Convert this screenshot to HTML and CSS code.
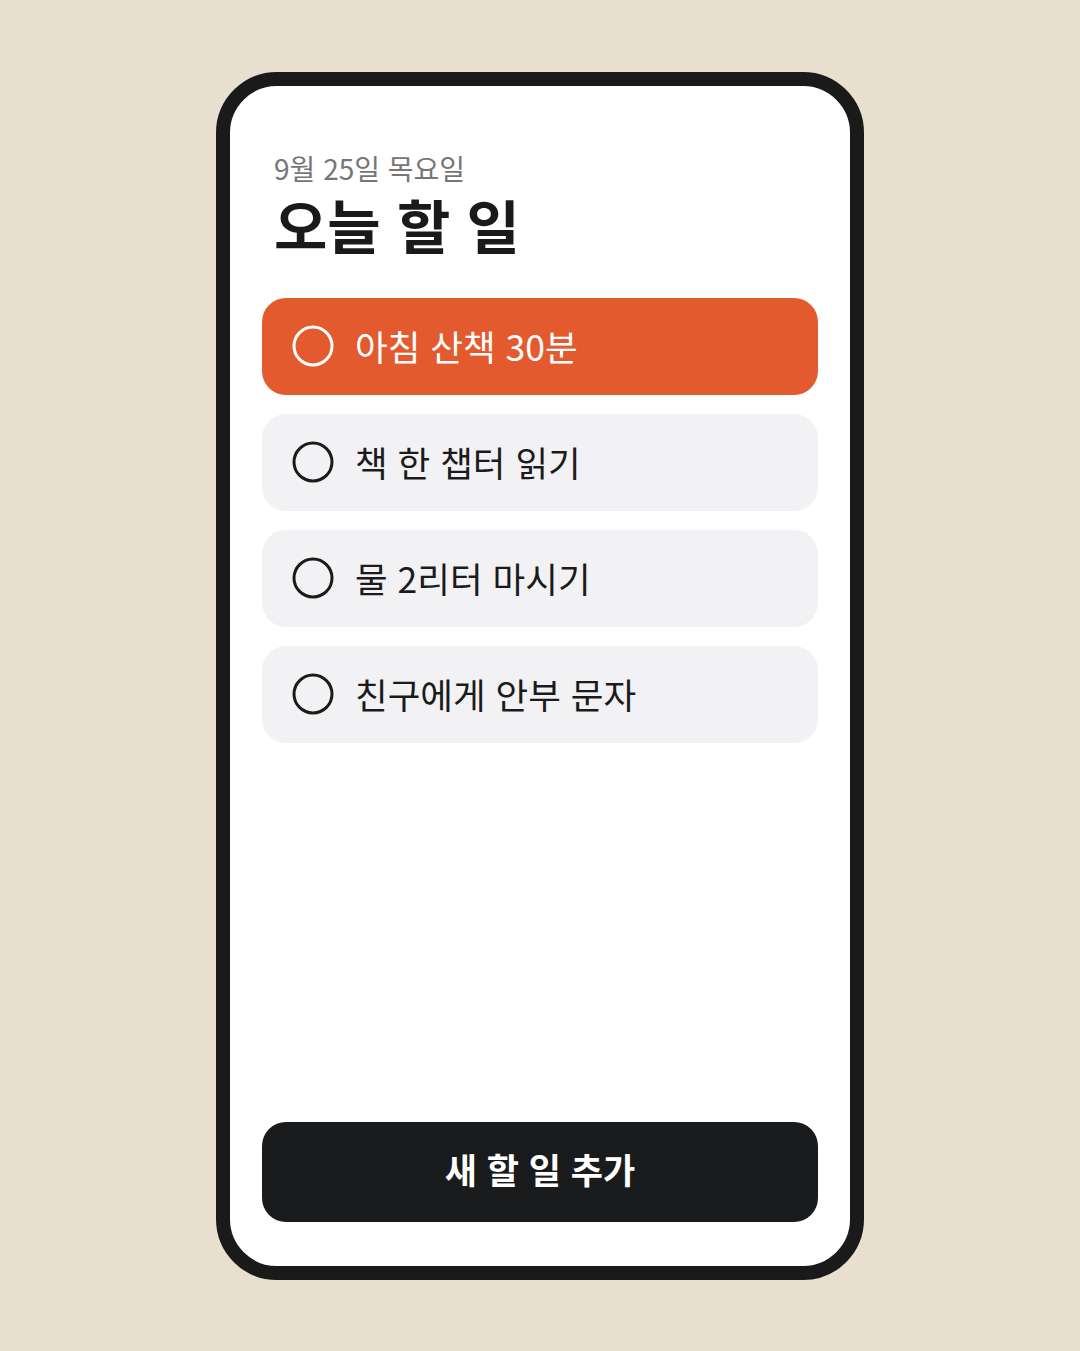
FILE: index.html
```html
<!DOCTYPE html>
<html lang="ko">
<head>
<meta charset="utf-8">
<link rel="stylesheet" href="styles.css">
</head>
<body>
<div class="stage">
  <div class="phone">
    <header class="head">
      <div class="date">9월 25일 목요일</div>
      <h1 class="title">오늘 할 일</h1>
    </header>
    <ul class="list">
      <li class="item active">
        <svg class="check" viewBox="0 0 42 42"><circle cx="21" cy="21" r="19" fill="none" stroke="currentColor" stroke-width="3"/></svg>
        <span class="label">아침 산책 30분</span>
      </li>
      <li class="item">
        <svg class="check" viewBox="0 0 42 42"><circle cx="21" cy="21" r="19" fill="none" stroke="currentColor" stroke-width="3"/></svg>
        <span class="label">책 한 챕터 읽기</span>
      </li>
      <li class="item">
        <svg class="check" viewBox="0 0 42 42"><circle cx="21" cy="21" r="19" fill="none" stroke="currentColor" stroke-width="3"/></svg>
        <span class="label">물 2리터 마시기</span>
      </li>
      <li class="item">
        <svg class="check" viewBox="0 0 42 42"><circle cx="21" cy="21" r="19" fill="none" stroke="currentColor" stroke-width="3"/></svg>
        <span class="label">친구에게 안부 문자</span>
      </li>
    </ul>
    <button class="add">새 할 일 추가</button>
  </div>
</div>
</body>
</html>
```
FILE: styles.css
```css
* { box-sizing: border-box; }
html, body { margin: 0; padding: 0; }
body {
  background: #e8dfcf;
  font-family: "Noto Sans CJK KR", "Noto Sans", sans-serif;
  color: #1b1b1b;
}
.stage {
  width: 1080px;
  height: 1351px;
  display: flex;
  align-items: center;
  justify-content: center;
}
.phone {
  width: 648px;
  height: 1208px;
  background: #fff;
  border: 14px solid #1a1a1a;
  border-radius: 61px;
  padding: 64px 32px 44px;
  display: flex;
  flex-direction: column;
}
.head {
  padding: 0 12px;
  margin-bottom: 43px;
}
.date {
  font-size: 28px;
  line-height: 36px;
  color: #767676;
}
.title {
  margin: 7px 0 0;
  font-size: 58px;
  line-height: 62px;
  font-weight: 700;
  color: #1a1a1a;
}
.list {
  list-style: none;
  margin: 0;
  padding: 0;
  display: flex;
  flex-direction: column;
  gap: 19px;
  flex: 1;
}
.item {
  height: 97px;
  border-radius: 24px;
  background: #f2f2f4;
  display: flex;
  align-items: center;
  padding: 0 29px 0 30px;
  gap: 21px;
  color: #1b1b1b;
}
.item.active {
  background: #e35a2f;
  color: #fff;
}
.check {
  width: 42px;
  height: 42px;
  flex: none;
}
.label {
  font-size: 35.5px;
  line-height: 1;
}
.add {
  height: 100px;
  border: none;
  border-radius: 24px;
  background: #191b1d;
  color: #fff;
  font-family: inherit;
  font-size: 35px;
  font-weight: 700;
  padding: 0 0 6px;
}
```
